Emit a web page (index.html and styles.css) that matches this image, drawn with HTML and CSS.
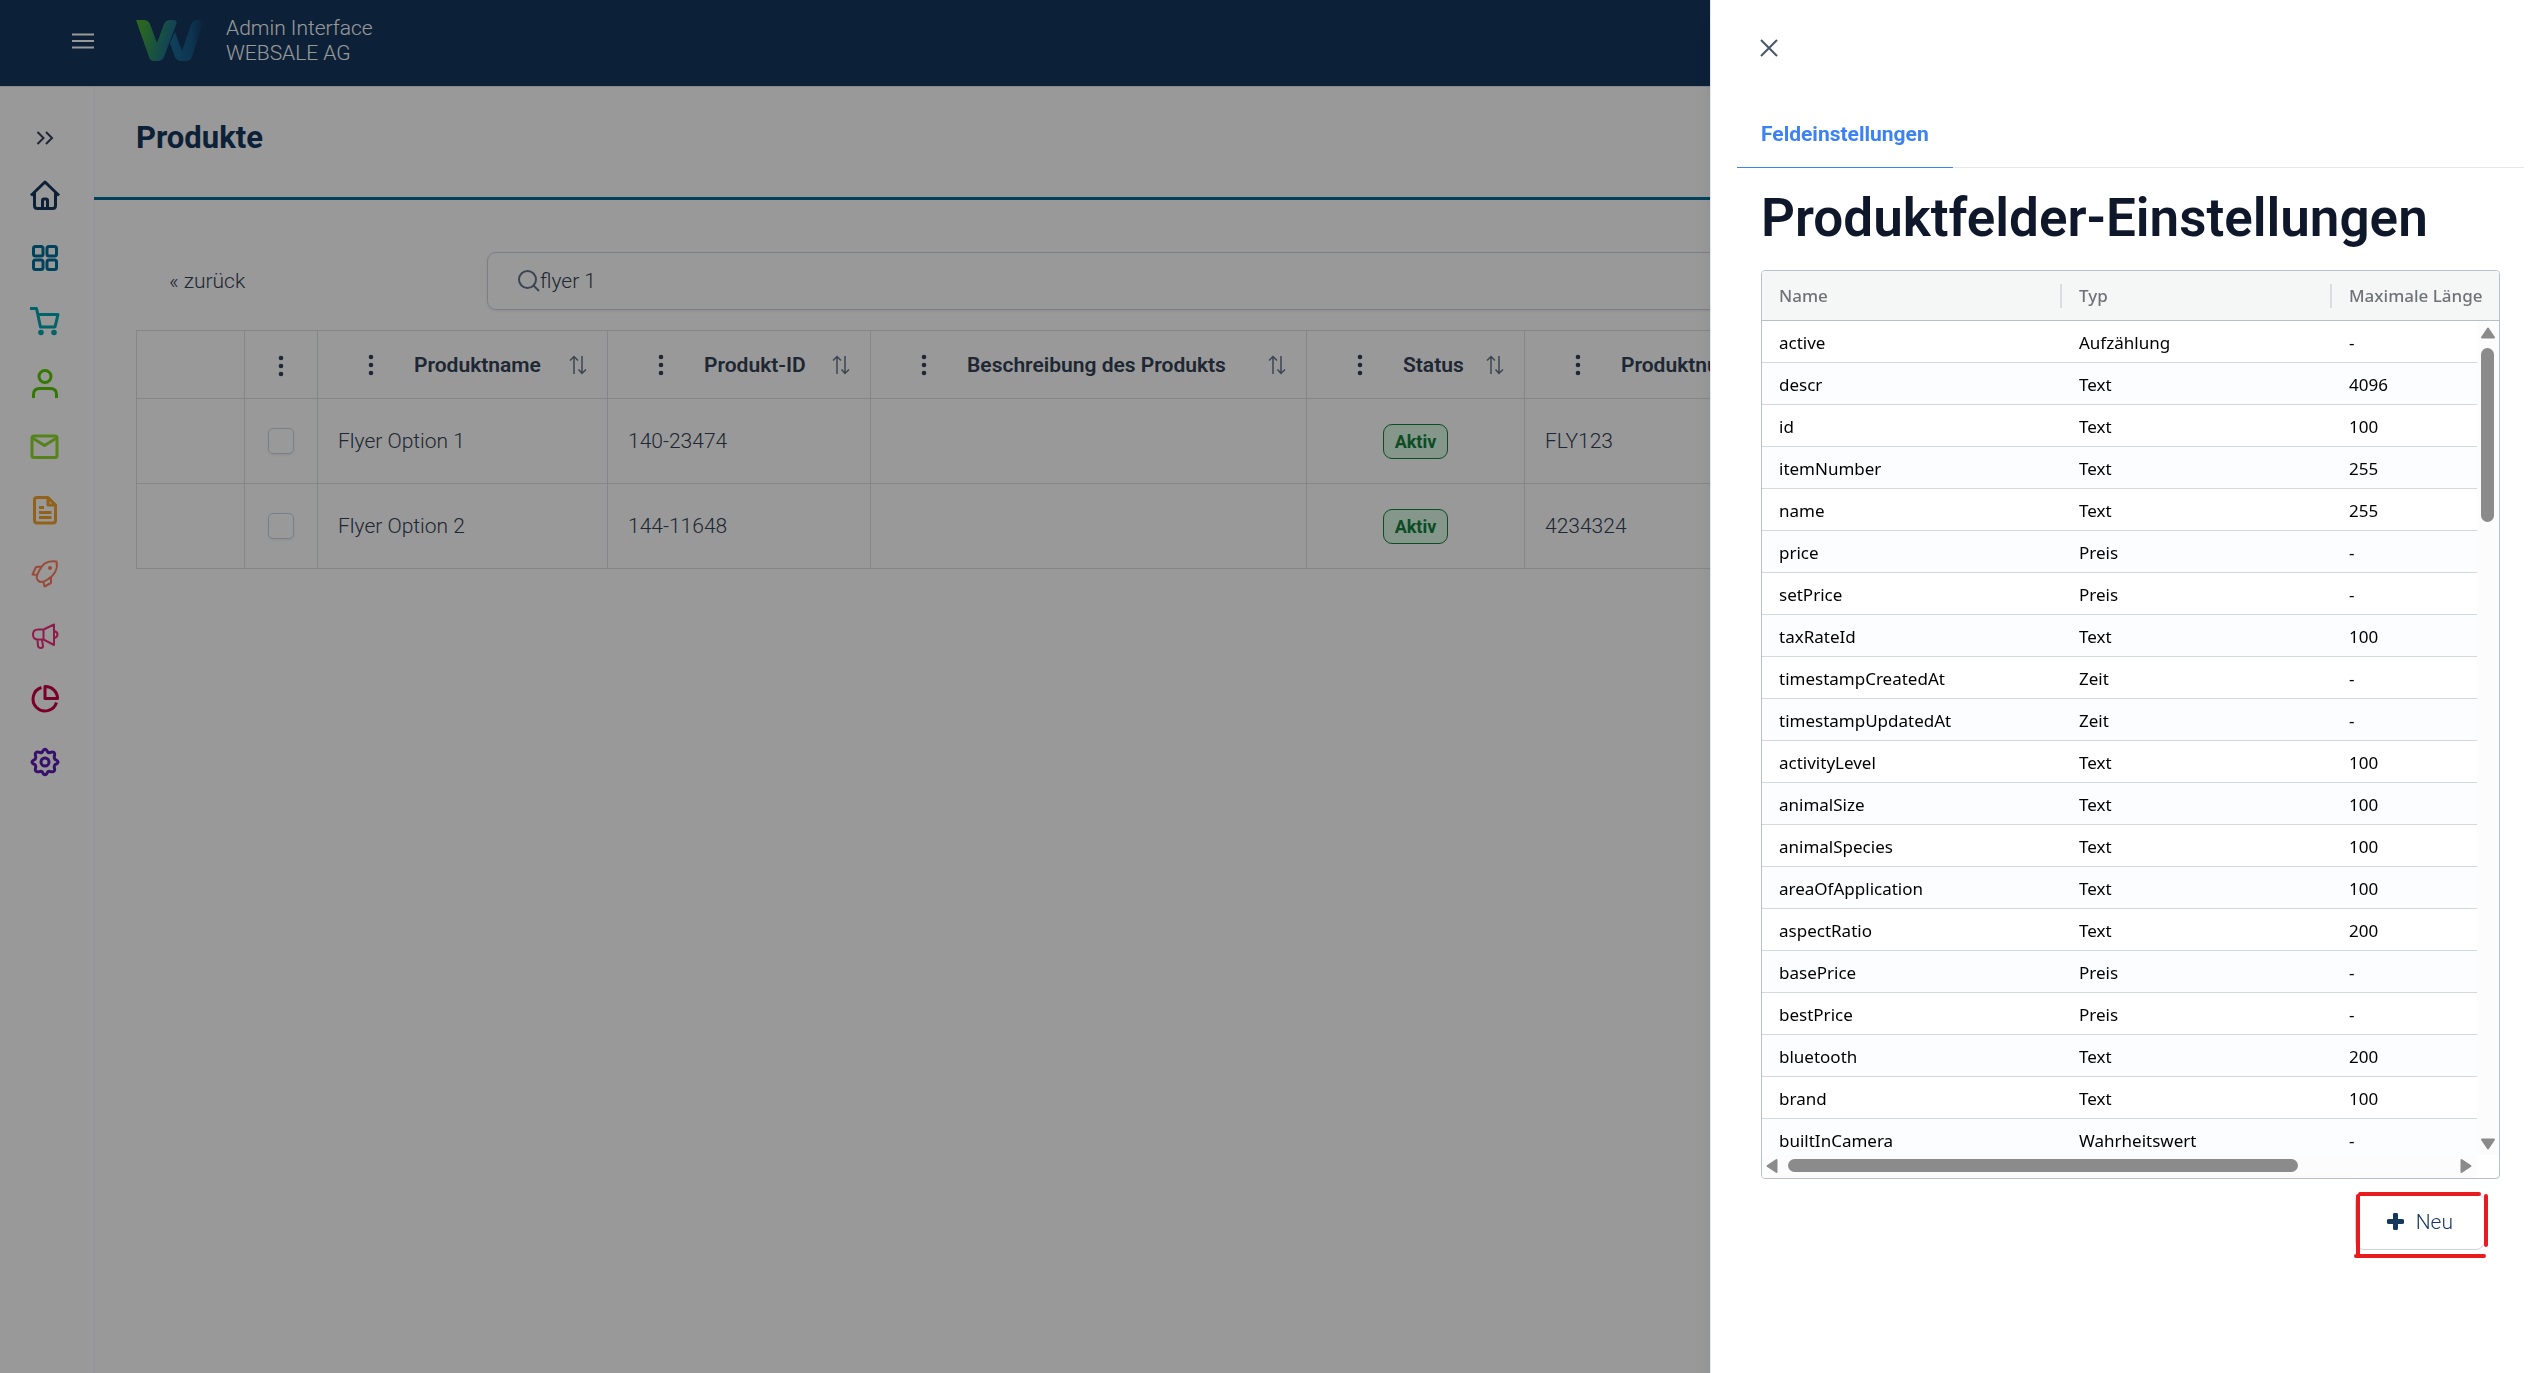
FILE: index.html
```html
<!DOCTYPE html>
<html lang="de">
<head>
  <meta charset="UTF-8">
  <meta name="viewport" content="width=device-width, initial-scale=1.0">
  <title>Produkte - Admin Interface</title>
  <link rel="stylesheet" href="styles.css">
</head>
<body>
  <svg class="sprite" aria-hidden="true">
    <symbol id="dots" viewBox="0 0 6 22"><circle cx="3" cy="3" r="2.3"/><circle cx="3" cy="11" r="2.3"/><circle cx="3" cy="19" r="2.3"/></symbol>
    <symbol id="sort" viewBox="0 0 18 20"><path d="M5 19V2M1 5.500L5 1.500L9 5.500M13 1V18M9.500 14.500L13 18.500L17 14.500" fill="none" stroke="currentColor" stroke-width="1.500"/></symbol>
  </svg>

  <header class="topbar">
    <button class="icon-btn menu-btn" aria-label="Menü">
      <svg width="22" height="16" viewBox="0 0 22 16"><path d="M0 1.500H22M0 8H22M0 14.500H22" stroke="#fff" stroke-width="2"/></svg>
    </button>
    <svg class="logo" width="68" height="42" viewBox="0 0 68 42">
      <defs>
        <linearGradient id="g1" x1="0" x2="1" y1="0" y2="0.3"><stop offset="0.2" stop-color="#46a83c"/><stop offset="0.6" stop-color="#2b8a6c"/><stop offset="1" stop-color="#1c6a96"/></linearGradient>
        <linearGradient id="g2" x1="0" x2="1" y1="0" y2="0"><stop offset="0" stop-color="#1b6d9b"/><stop offset="0.6" stop-color="#175a89"/><stop offset="1" stop-color="#14375e"/></linearGradient>
      </defs>
      <path d="M39 12L46 31L55 5Q57 0 61 0H68L56 37Q54 41 50 41H45Q41 41 39 37L34 23Z" fill="url(#g2)"/>
      <path d="M0 0H8Q12 0 14 4L21 23L28 4Q30 0 34 0H38Q42 1 40 5L28 37Q26 41 22 41H18Q14 41 13 37Z" fill="url(#g1)"/>
    </svg>
    <div class="brand">Admin Interface<br>WEBSALE AG</div>
  </header>

  <div class="layout">
    <nav class="sidebar">
      <button class="icon-btn expand" aria-label="Ausklappen">
        <svg width="18" height="14" viewBox="0 0 18 14" fill="none" stroke="#334155" stroke-width="2"><path d="M1.500 1L7.500 7L1.500 13M10 1L16 7L10 13"/></svg>
      </button>
      <a href="#" class="c-home" aria-label="Start"><svg viewBox="0 0 30 30"><path d="M1 15.500L15 2L29 15.500M4.500 13V25.500Q4.500 28.500 7.500 28.500H22.500Q25.500 28.500 25.500 25.500V13M12.500 28V20.500Q12.500 19 14 19H16Q17.500 19 17.500 20.500V28"/></svg></a>
      <a href="#" class="c-grid" aria-label="Übersicht"><svg viewBox="0 0 30 30"><rect x="3.500" y="3.500" width="9.500" height="9.500" rx="2"/><rect x="17" y="3.500" width="9.500" height="9.500" rx="2"/><rect x="3.500" y="17" width="9.500" height="9.500" rx="2"/><rect x="17" y="17" width="9.500" height="9.500" rx="2"/></svg></a>
      <a href="#" class="c-cart" aria-label="Bestellungen"><svg viewBox="0 0 30 30"><path d="M0 2.500H6.500L10.500 21H25L28 8.500H8"/><circle cx="11" cy="26.500" r="1.300"/><circle cx="24" cy="26.500" r="1.300"/></svg></a>
      <a href="#" class="c-user" aria-label="Kunden"><svg viewBox="0 0 30 30"><circle cx="15" cy="7.500" r="6"/><path d="M3.500 29V25.500Q3.500 19.500 9.500 19.500H20.500Q26.500 19.500 26.500 25.500V29"/></svg></a>
      <a href="#" class="c-mail" aria-label="Nachrichten"><svg viewBox="0 0 30 30"><rect x="2" y="4" width="25" height="21.500" rx="2"/><path d="M2.500 6L14.500 13.500L26.500 6"/></svg></a>
      <a href="#" class="c-file" aria-label="Inhalte"><svg viewBox="0 0 30 30"><path d="M18 2.500H7Q4.500 2.500 4.500 5V25.500Q4.500 28 7 28H23Q25.500 28 25.500 25.500V10ZM18 3V10H25M9 12.500H14M9 17.500H21.500M9 22.500H21.500"/></svg></a>
      <a href="#" class="c-rocket" aria-label="Aktionen"><svg viewBox="0 0 30 30" class="thin"><path d="M26.500 3.500C18 2 12 6 9 13Q5 20 8 22.500Q11 26 17.500 21.500C25 17 28 10 26.500 3.500ZM12 8.500L6 9L2.500 16.500L8 17M13.500 24L14.500 28.500L21 25L21 19"/><circle cx="20" cy="10" r="1"/></svg></a>
      <a href="#" class="c-horn" aria-label="Marketing"><svg viewBox="0 0 30 30" class="thin"><path d="M13.500 8.500H8Q3 8.500 3 13.500Q3 18.500 8 18.500H13.500ZM13.500 8.500L24 3.500V24L13.500 18.500M24.500 10Q27.500 11 27.500 13.500Q27.500 16 24.500 17M7.500 19L8 25Q8.500 27 11 27Q13 27 13 25L12 19"/></svg></a>
      <a href="#" class="c-pie" aria-label="Statistik"><svg viewBox="0 0 30 30"><path d="M11.500 3.500A12 12 0 1 0 26.500 18.500M15 2.500V14.500H27.500A12 12 0 0 0 15 2.500Z"/></svg></a>
      <a href="#" class="c-gear" aria-label="Einstellungen"><svg viewBox="0 0 30 30"><path d="M12.300 5Q15 -0.500 17.700 5Q18.500 6 20 5.500Q26 3.500 24.300 9.500Q24 11 25 12.300Q31 15 25 17.700Q24 19 24.300 20.500Q26 26 20 24.500Q18.500 24 17.700 25Q15 30.500 12.300 25Q11.500 24 10 24.500Q4 26 5.700 20.500Q6 19 5 17.700Q-1 15 5 12.300Q6 11 5.700 9.500Q4 3.500 10 5.500Q11.500 6 12.300 5Z"/><circle cx="15" cy="15" r="4"/></svg></a>
    </nav>

    <main class="content">
      <div class="page-head"><h2>Produkte</h2></div>
      <div class="page-body">
        <div class="toolbar">
          <a href="#" class="back">« zurück</a>
          <label class="search">
            <svg width="22" height="22" viewBox="0 0 22 22" fill="none" stroke="#64748b" stroke-width="2"><circle cx="9.500" cy="9.500" r="8.500"/><path d="M15.500 15.500L21 21"/></svg>
            <input type="text" value="flyer 1" aria-label="Suche">
          </label>
        </div>

        <table class="products">
          <colgroup><col class="w-tools"><col class="w-check"><col class="w-name"><col class="w-id"><col class="w-desc"><col class="w-status"><col></colgroup>
          <thead>
            <tr>
              <th></th>
              <th class="center"><svg class="dots"><use href="#dots"/></svg></th>
              <th><div class="th"><svg class="dots"><use href="#dots"/></svg><span>Produktname</span><svg class="sort"><use href="#sort"/></svg></div></th>
              <th><div class="th"><svg class="dots"><use href="#dots"/></svg><span>Produkt-ID</span><svg class="sort"><use href="#sort"/></svg></div></th>
              <th><div class="th"><svg class="dots"><use href="#dots"/></svg><span>Beschreibung des Produkts</span><svg class="sort"><use href="#sort"/></svg></div></th>
              <th><div class="th"><svg class="dots"><use href="#dots"/></svg><span>Status</span><svg class="sort"><use href="#sort"/></svg></div></th>
              <th><div class="th"><svg class="dots"><use href="#dots"/></svg><span>Produktnummer</span></div></th>
            </tr>
          </thead>
          <tbody>
            <tr>
              <td></td>
              <td class="center"><input type="checkbox" aria-label="Flyer Option 1"></td>
              <td>Flyer Option 1</td><td>140-23474</td><td></td>
              <td class="center"><span class="badge">Aktiv</span></td>
              <td>FLY123</td>
            </tr>
            <tr>
              <td></td>
              <td class="center"><input type="checkbox" aria-label="Flyer Option 2"></td>
              <td>Flyer Option 2</td><td>144-11648</td><td></td>
              <td class="center"><span class="badge">Aktiv</span></td>
              <td>4234324</td>
            </tr>
          </tbody>
        </table>
      </div>
    </main>
  </div>

  <div class="overlay"></div>

  <aside class="drawer">
    <button class="icon-btn close" aria-label="Schließen">
      <svg width="18" height="18" viewBox="0 0 18 18"><path d="M1 1L17 17M17 1L1 17" stroke="#475569" stroke-width="2"/></svg>
    </button>
    <div class="tabs"><button class="tab">Feldeinstellungen</button></div>
    <div class="panel">
      <h1>Produktfelder-Einstellungen</h1>
      <div class="grid">
        <div class="grid-view">
          <table class="fields">
            <thead><tr><th>Name</th><th>Typ</th><th>Maximale Länge</th></tr></thead>
            <tbody>
              <tr><td>active</td><td>Aufzählung</td><td>-</td></tr>
              <tr><td>descr</td><td>Text</td><td>4096</td></tr>
              <tr><td>id</td><td>Text</td><td>100</td></tr>
              <tr><td>itemNumber</td><td>Text</td><td>255</td></tr>
              <tr><td>name</td><td>Text</td><td>255</td></tr>
              <tr><td>price</td><td>Preis</td><td>-</td></tr>
              <tr><td>setPrice</td><td>Preis</td><td>-</td></tr>
              <tr><td>taxRateId</td><td>Text</td><td>100</td></tr>
              <tr><td>timestampCreatedAt</td><td>Zeit</td><td>-</td></tr>
              <tr><td>timestampUpdatedAt</td><td>Zeit</td><td>-</td></tr>
              <tr><td>activityLevel</td><td>Text</td><td>100</td></tr>
              <tr><td>animalSize</td><td>Text</td><td>100</td></tr>
              <tr><td>animalSpecies</td><td>Text</td><td>100</td></tr>
              <tr><td>areaOfApplication</td><td>Text</td><td>100</td></tr>
              <tr><td>aspectRatio</td><td>Text</td><td>200</td></tr>
              <tr><td>basePrice</td><td>Preis</td><td>-</td></tr>
              <tr><td>bestPrice</td><td>Preis</td><td>-</td></tr>
              <tr><td>bluetooth</td><td>Text</td><td>200</td></tr>
              <tr><td>brand</td><td>Text</td><td>100</td></tr>
              <tr><td>builtInCamera</td><td>Wahrheitswert</td><td>-</td></tr>
            </tbody>
          </table>
          <div class="vbar">
            <svg width="16" height="12" viewBox="0 0 16 12"><path d="M8 1.500L14 10.500H2Z"/></svg>
            <div class="track"><div class="thumb"></div></div>
            <svg width="16" height="12" viewBox="0 0 16 12"><path d="M8 10.500L14 1.500H2Z"/></svg>
          </div>
        </div>
        <div class="hbar">
          <svg width="12" height="16" viewBox="0 0 12 16"><path d="M1.500 8L10.500 2V14Z"/></svg>
          <div class="track"><div class="thumb"></div></div>
          <svg width="12" height="16" viewBox="0 0 12 16"><path d="M10.500 8L1.500 2V14Z"/></svg>
        </div>
      </div>
      <div class="actions">
        <div class="marked">
          <button class="new-btn">
            <svg width="17" height="17" viewBox="0 0 17 17"><path d="M8.500 2V15M2 8.500H15" stroke="#14375e" stroke-width="5" stroke-linecap="round"/></svg>
            Neu
          </button>
          <svg class="mark" width="136" height="70" viewBox="0 0 136 70"><path d="M7 4H126M5 6V66M3 66H131M133 6V55" fill="none" stroke="#e81c1c" stroke-width="4" stroke-linecap="round"/></svg>
        </div>
      </div>
    </div>
  </aside>
</body>
</html>
```

FILE: styles.css
```css
* {
  box-sizing: border-box;
}

body {
  margin: 0;
  height: 100vh;
  overflow: hidden;
  display: flex;
  flex-direction: column;
  background: #fff;
  color: #334155;
  font-family: Roboto, "Liberation Sans", sans-serif;
  font-size: 21px;
  font-weight: 300;
}

a {
  color: inherit;
  text-decoration: none;
}

.sprite {
  display: none;
}

.icon-btn {
  display: flex;
  padding: 0;
  border: none;
  background: none;
  cursor: pointer;
}

/* Kopfzeile */
.topbar {
  display: flex;
  align-items: center;
  height: 87px;
  flex: none;
  padding: 0 0 4px 72px;
  background: #14375e;
  border-bottom: 1px solid #dfe3ea;
  color: #fff;
}

.logo {
  margin: 0 22px 0 42px;
}

.brand {
  line-height: 25px;
}

.layout {
  display: flex;
  flex: 1;
}

/* Navigation */
.sidebar {
  display: flex;
  flex-direction: column;
  align-items: center;
  gap: 33px;
  width: 95px;
  flex: none;
  padding: 44px 5px 0 0;
  border-right: 1px solid #f5f7f9;
}

.sidebar .expand {
  height: 14px;
  margin-bottom: 2px;
}

.sidebar a {
  display: flex;
}

.sidebar a svg {
  width: 30px;
  height: 30px;
  fill: none;
  stroke: currentColor;
  stroke-width: 3;
  stroke-linejoin: round;
}

.sidebar a svg.thin {
  stroke-width: 2;
}

.c-home { color: #14375e; }
.c-grid { color: #006e99; }
.c-cart { color: #00a5b0; }
.c-user { color: #55c800; }
.c-mail { color: #90d92e; }
.c-file { color: #f6a42c; }
.c-rocket { color: #ff7d62; }
.c-horn { color: #ee2f80; }
.c-pie { color: #c80046; }
.c-gear { color: #5c1cb4; }

/* Inhalt */
.content {
  flex: 1;
  min-width: 0;
  margin-left: -1px;
}

.page-head {
  height: 113px;
  padding: 33px 42px;
  border-bottom: 3px solid #006e99;
}

.page-head h2 {
  margin: 0;
  font-size: 31px;
  line-height: 36px;
  font-weight: 700;
  color: #14375e;
}

.page-body {
  padding: 52px 42px;
}

.toolbar {
  display: flex;
  align-items: center;
  margin-bottom: 20px;
}

.back {
  width: 351px;
  padding-left: 33px;
}

.search {
  display: flex;
  align-items: center;
  flex: 1;
  height: 58px;
  padding: 0 30px;
  border: 1px solid #cbd5e1;
  border-radius: 9px;
  box-shadow: 0 1px 3px rgba(18, 18, 23, 0.08);
}

.search input {
  flex: 1;
  padding: 0;
  border: none;
  outline: none;
  background: none;
  color: #334155;
  font: inherit;
}

.products {
  width: 100%;
  table-layout: fixed;
  border-collapse: collapse;
}

.w-tools { width: 108px; }
.w-check { width: 73px; }
.w-name { width: 290px; }
.w-id { width: 263px; }
.w-desc { width: 436px; }
.w-status { width: 218px; }

.products th,
.products td {
  height: 85px;
  padding: 0 20px;
  border: 1px solid #dcdfe3;
  text-align: left;
}

.products th {
  height: 68px;
  font-weight: 600;
}

.products .center {
  padding: 0;
  text-align: center;
}

.th {
  display: flex;
  align-items: center;
  padding-left: 30px;
}

.th span {
  margin-left: 40px;
  white-space: nowrap;
}

.dots {
  width: 6px;
  height: 22px;
  fill: #334155;
  vertical-align: middle;
}

.sort {
  width: 18px;
  height: 20px;
  margin-left: auto;
  color: #64748b;
}

.products input {
  appearance: none;
  width: 26px;
  height: 26px;
  margin: 0;
  border: 1px solid #cbd5e1;
  border-radius: 5px;
  vertical-align: middle;
  box-shadow: 0 1px 3px rgba(18, 18, 23, 0.08);
}

.badge {
  display: inline-block;
  height: 35px;
  padding: 0 11px;
  border: 1px solid #15803d;
  border-radius: 9px;
  background: #dcfce7;
  color: #15803d;
  font-size: 18px;
  line-height: 33px;
  font-weight: 700;
  vertical-align: middle;
}

.overlay {
  position: fixed;
  inset: 0;
  background: rgba(0, 0, 0, 0.4);
}

/* Seitenleiste rechts */
.drawer {
  position: fixed;
  top: 0;
  right: 0;
  bottom: 0;
  width: 838px;
  max-width: 100%;
  padding: 39px 24px 0 26px;
  background: #fff;
  border-left: 1px solid #e2e8f0;
  box-shadow: 0 20px 25px -5px rgba(0, 0, 0, 0.1), 0 8px 10px -6px rgba(0, 0, 0, 0.1);
}

.close {
  margin-left: 23px;
}

.tabs {
  display: flex;
  margin-top: 52px;
  border-bottom: 1px solid #e2e8f0;
}

.tab {
  margin-bottom: -1px;
  padding: 12px 24px 20px;
  border: none;
  border-bottom: 1px solid #3b82f6;
  background: none;
  color: #3b82f6;
  font: 700 21px/26px Roboto, "Liberation Sans", sans-serif;
}

.panel {
  padding: 18px 24px 0;
}

.panel h1 {
  margin: 0 0 20px;
  color: #0f172a;
  font-size: 53px;
  line-height: 64px;
  font-weight: 600;
}

.grid {
  border: 1px solid #babfc7;
  border-radius: 4px;
  overflow: hidden;
  color: #000;
  font-family: "Noto Sans", "Open Sans", sans-serif;
  font-size: 17px;
  font-weight: 400;
}

.grid-view {
  display: grid;
  height: 884px;
  overflow: hidden;
}

.fields {
  grid-area: 1 / 1;
  width: 100%;
  table-layout: fixed;
  border-collapse: separate;
  border-spacing: 0;
}

.fields th,
.fields td {
  height: 42px;
  padding: 2px 0 0 17px;
  border-bottom: 1px solid #d5d8dc;
  text-align: left;
  white-space: nowrap;
}

.fields th {
  height: 50px;
  padding-top: 0;
  background: linear-gradient(#d9dce0, #d9dce0) no-repeat right center / 2px 24px #f5f7f7;
  border-color: #babfc7;
  color: #6f7375;
  font-weight: 500;
}

.fields th:first-child {
  width: 300px;
}

.fields th:nth-child(2) {
  width: 270px;
}

.fields th:last-child {
  background: #f5f7f7;
}

.fields tr:nth-child(even) td {
  background: #fcfdfe;
}

.vbar {
  grid-area: 1 / 1;
  justify-self: end;
  display: flex;
  flex-direction: column;
  align-items: center;
  gap: 9px;
  width: 22px;
  height: 834px;
  margin-top: 50px;
  padding: 6px 1px 5px 0;
  background: #fcfcfc;
}

.hbar {
  display: flex;
  align-items: center;
  gap: 10px;
  height: 23px;
  margin-right: 22px;
  padding: 0 5px 2px 4px;
  background: #fcfcfc;
}

.vbar svg,
.hbar svg {
  flex: none;
  fill: #8b8b8b;
  stroke: #8b8b8b;
  stroke-width: 2;
  stroke-linejoin: round;
}

.track {
  flex: 1;
}

.thumb {
  border-radius: 7px;
  background: #8b8b8b;
}

.vbar .thumb {
  width: 13px;
  height: 174px;
}

.hbar .thumb {
  width: 77%;
  height: 13px;
}

.actions {
  display: flex;
  justify-content: flex-end;
  padding: 14px 15px 0 0;
}

.marked {
  position: relative;
}

.new-btn {
  display: flex;
  align-items: center;
  gap: 12px;
  height: 57px;
  padding: 0 31px;
  border: 1px solid #cbd5e1;
  border-radius: 9px;
  background: #fff;
  color: #14375e;
  font: 300 21px Roboto, "Liberation Sans", sans-serif;
}

.mark {
  position: absolute;
  top: -3px;
  right: -4px;
}
```
